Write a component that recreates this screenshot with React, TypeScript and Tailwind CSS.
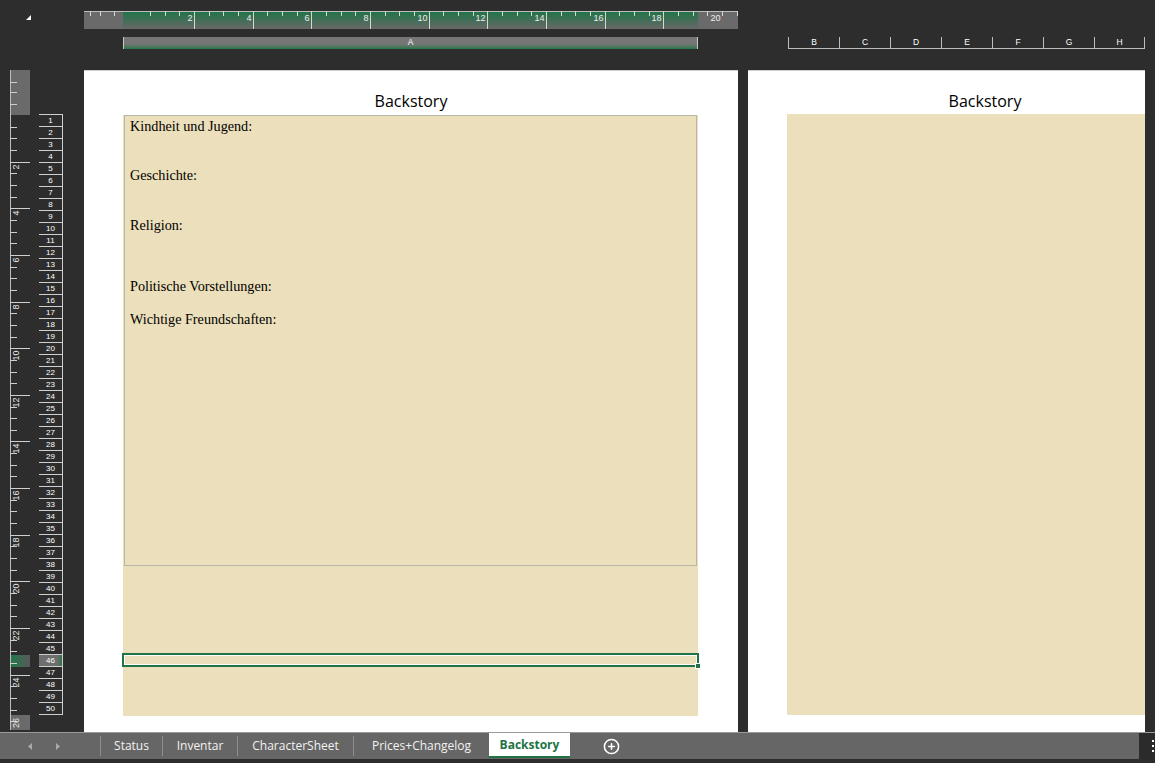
import { CirclePlus } from "lucide-react";

const rows = Array.from({ length: 50 }, (_, i) => i + 1);
const cols = ["B", "C", "D", "E", "F", "G", "H"];

const tabs = [
  { name: "Status", w: "w-[62px]" },
  { name: "Inventar", w: "w-[75px]" },
  { name: "CharacterSheet", w: "w-[116px]" },
  { name: "Prices+Changelog", w: "w-[136px]" },
];

// horizontal ruler above column A, 29.33px per cm
function TopRuler() {
  const cm = 29.33;
  const origin = 51.3;
  const marks = [];
  for (const x of [6, 16, 30]) {
    marks.push(<line key={"m" + x} x1={x + 0.5} x2={x + 0.5} y1={0} y2={5} stroke="#d6d6d6" />);
  }
  for (let k = 1; k <= 41; k++) {
    const x = Math.round(origin + (k * cm) / 2) + 0.5;
    const inPage = x > 39 && x < 614;
    const major = k % 4 === 0;
    marks.push(
      <line key={k} x1={x} x2={x} y1={0} y2={major && inPage ? 18 : 5} stroke="#d6d6d6" />
    );
    if (major) {
      marks.push(
        <text key={"t" + k} x={x - 2} y={10} textAnchor="end" fontSize={9} fill="#eeeeee" fontFamily="Liberation Sans, sans-serif">
          {k / 2}
        </text>
      );
    }
  }
  return (
    <svg width={654} height={18} className="block">
      <defs>
        <linearGradient id="hg" x1="0" y1="0" x2="0" y2="1">
          <stop offset="0" stopColor="#1d7446" />
          <stop offset="1" stopColor="#686868" />
        </linearGradient>
      </defs>
      <rect x={0} y={0} width={654} height={18} fill="#6a6a6a" />
      <rect x={39} y={0} width={575} height={18} fill="url(#hg)" />
      <line x1={0} x2={654} y1={0.5} y2={0.5} stroke="#bdbdbd" />
      {marks}
    </svg>
  );
}

// vertical ruler, 23.32px per cm
function SideRuler() {
  const cm = 23.32;
  const origin = 45;
  const marks = [];
  for (const y of [12, 22, 34]) {
    marks.push(<line key={"m" + y} x1={0} x2={7} y1={y + 0.5} y2={y + 0.5} stroke="#cfcfcf" />);
  }
  for (let k = 1; k <= 52; k++) {
    const y = Math.round(origin + (k * cm) / 2) + 0.5;
    const major = k % 4 === 0;
    marks.push(<line key={k} x1={0} x2={major && y < 645 ? 20 : 7} y1={y} y2={y} stroke="#cfcfcf" />);
    if (major) {
      // keep the last label inside the ruler
      const ly = Math.min(y + 2, 648);
      marks.push(
        <text
          key={"t" + k}
          transform={`translate(9, ${ly}) rotate(-90)`}
          textAnchor="end"
          fontSize={9}
          fill="#e6e6e6"
          fontFamily="Liberation Sans, sans-serif"
        >
          {k / 2}
        </text>
      );
    }
  }
  return (
    <svg width={20} height={660} className="block">
      <defs>
        <linearGradient id="vg" x1="0" y1="0" x2="1" y2="0">
          <stop offset="0" stopColor="#1f7a4a" />
          <stop offset="1" stopColor="#595959" />
        </linearGradient>
      </defs>
      <rect x={0} y={0} width={20} height={45} fill="#6a6a6a" />
      <rect x={0} y={585} width={20} height={12} fill="url(#vg)" />
      <rect x={0} y={645} width={20} height={15} fill="#6a6a6a" />
      <line x1={0.5} x2={0.5} y1={0} y2={660} stroke="#bdbdbd" />
      {marks}
    </svg>
  );
}

function Title({ className = "" }: { className?: string }) {
  return (
    <div className={"h-[43px] pt-[19px] text-[16px] leading-[22px] text-black font-['Open_Sans',sans-serif] " + className}>
      Backstory
    </div>
  );
}

export default function App() {
  return (
    <div className="w-[1155px] h-[763px] bg-[#2d2d2d] overflow-hidden flex flex-col font-['Liberation_Sans',sans-serif] select-none">
      {/* ruler row */}
      <div className="flex h-[37px] shrink-0">
        <div className="w-[84px]">
          <svg width={6} height={6} className="block ml-[26px] mt-[15px]">
            <polygon points="5,0 5,5 0,5" fill="#ffffff" />
          </svg>
        </div>
        <div className="mt-[11px]">
          <TopRuler />
        </div>
      </div>

      {/* column headers */}
      <div className="flex h-[33px] shrink-0 items-start">
        <div className="ml-[123px] w-[575px] h-[12px] border-l border-r border-[#c9c9c9] bg-linear-to-b from-[#767676] from-55% to-[#23774b] text-white text-[8.5px] leading-[11px] text-center">
          A
        </div>
        <div className="ml-[90px] flex">
          {cols.map((c, i) => (
            <div
              key={c}
              className={
                "w-[51px] h-[12px] border-l border-b border-[#bdbdbd] text-white text-[8.5px] leading-[11px] text-center " +
                (i === cols.length - 1 ? "border-r" : "")
              }
            >
              {c}
            </div>
          ))}
        </div>
      </div>

      {/* sheet */}
      <div className="flex h-[662px] shrink-0 items-start">
        <div className="ml-[10px]">
          <SideRuler />
        </div>
        <div className="ml-[9px] mt-[44px] w-[24px] flex flex-col border-t border-[#cfcfcf]">
          {rows.map((r) => (
            <div
              key={r}
              className={
                "h-[12px] border-b border-r border-[#cfcfcf] text-white text-[8px] leading-[11px] text-center " +
                (r === 46 ? "bg-linear-to-r from-[#6e6e6e] from-80% to-[#22744a]" : "")
              }
            >
              {r}
            </div>
          ))}
        </div>

        {/* page 1 */}
        <div className="ml-[21px] w-[654px] h-[662px] bg-white border-t border-[#cfcfcf]">
          <Title className="text-center" />
          <div className="ml-[39px] w-[575px] h-[601px] bg-[#ecdfbb]">
            <div className="mx-px mt-px h-[451px] border border-[#b8b5ab] pl-[5px] pt-[2px] flex flex-col text-[14.2px] leading-[16px] text-black font-['Liberation_Serif',serif]">
              <div>Kindheit und Jugend:</div>
              <div className="mt-[33px]">Geschichte:</div>
              <div className="mt-[34px]">Religion:</div>
              <div className="mt-[45px]">Politische Vorstellungen:</div>
              <div className="mt-[17px]">Wichtige Freundschaften:</div>
            </div>
            <div className="relative mt-[87px] -mx-px h-[14px] border-2 border-[#217346] shadow-[inset_0_0_0_1px_#ffffff]">
              <div className="absolute -right-[4px] -bottom-[4px] w-[6px] h-[6px] bg-[#217346] border border-white" />
            </div>
          </div>
        </div>

        {/* page 2 */}
        <div className="ml-[10px] w-[397px] h-[662px] bg-white border-t border-[#cfcfcf] overflow-hidden">
          <Title className="ml-[39px] w-[396px] text-center" />
          <div className="ml-[39px] w-[358px] h-[601px] bg-[#ecdfbb]" />
        </div>
      </div>

      {/* sheet tabs */}
      <div className="h-[27px] shrink-0 bg-[#666666] border-t border-[#9a9a9a] flex items-stretch text-[12px] text-[#f2f2f2] font-['Open_Sans',sans-serif]">
        <div className="w-[100px] flex items-center">
          <svg width={4} height={7} className="ml-[28px]">
            <polygon points="4,0 4,7 0,3.5" fill="#a9a9a9" />
          </svg>
          <svg width={4} height={7} className="ml-[24px]">
            <polygon points="0,0 0,7 4,3.5" fill="#a9a9a9" />
          </svg>
        </div>
        {tabs.map((t) => (
          <div key={t.name} className={"flex items-center " + t.w}>
            <span className="w-px h-[20px] bg-[#8f8f8f]" />
            <span className="flex-1 text-center">{t.name}</span>
          </div>
        ))}
        <div className="w-[81px] h-[25px] bg-white border-b-2 border-[#217346] flex items-center justify-center pt-px font-bold text-[#217346]">
          Backstory
        </div>
        <div className="ml-[33px] flex items-center">
          <CirclePlus size={17} strokeWidth={2.2} color="#ffffff" />
        </div>
        <div className="flex-1" />
        <div className="w-[16px] bg-[#2b2b2b] flex flex-col items-end justify-center gap-[3px] pr-px">
          <span className="w-[2px] h-[2px] bg-white" />
          <span className="w-[2px] h-[2px] bg-white" />
          <span className="w-[2px] h-[2px] bg-white" />
        </div>
      </div>
      <div className="h-[4px] shrink-0" />
    </div>
  );
}
